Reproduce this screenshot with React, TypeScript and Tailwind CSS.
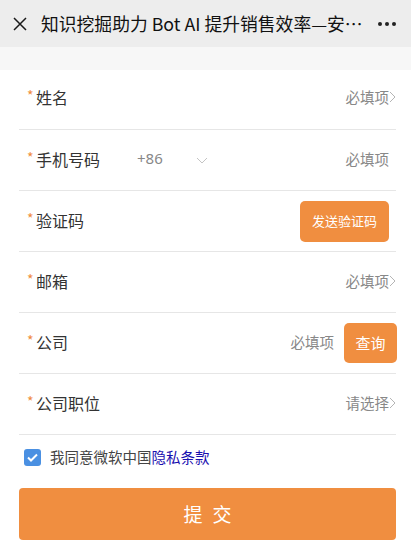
import React from "react";

const CJK = { fontFamily: '"Noto Sans CJK SC", "Noto Sans", sans-serif' };

function ChevronRight() {
  return (
    <svg width="7" height="12" viewBox="0 0 7 12" className="shrink-0">
      <path d="M1 1 L6 6 L1 11" fill="none" stroke="#b5b5b5" strokeWidth="1" />
    </svg>
  );
}

function Label({ text }: { text: string }) {
  return (
    <div className="flex items-center mb-[3px]">
      <span className="text-[#f08c3c] text-[14px] w-[9px] leading-none -mt-[4px]">*</span>
      <span className="text-[16px] text-[#333]">{text}</span>
    </div>
  );
}

function Row({ children }: { children: React.ReactNode }) {
  return (
    <div className="h-[61px] border-b border-[#e6e6e6] flex items-center pl-[8px]">{children}</div>
  );
}

export default function App() {
  return (
    <div className="w-[411px] h-[550px] bg-white overflow-hidden" style={CJK}>
      <div className="h-[47px] bg-[#ededed] flex items-center">
        <svg width="14" height="14" viewBox="0 0 14 14" className="ml-[13px] mr-[14px]">
          <path d="M1 1 L13 13 M13 1 L1 13" stroke="#1a1a1a" strokeWidth="1.5" fill="none" />
        </svg>
        <div className="text-[17.8px] text-[#111] whitespace-nowrap flex-1">知识挖掘助力 Bot AI 提升销售效率—安…</div>
        <div className="flex gap-[3px] mr-[15px]">
          <span className="w-[4px] h-[4px] rounded-full bg-[#222]"></span>
          <span className="w-[4px] h-[4px] rounded-full bg-[#222]"></span>
          <span className="w-[4px] h-[4px] rounded-full bg-[#222]"></span>
        </div>
      </div>
      <div className="h-[23px] bg-[#f7f7f7]"></div>
      <div className="ml-[19px] mr-[15px]">
        <div className="h-[60px] border-b border-[#e6e6e6] flex items-center pl-[8px] pb-[2px]">
          <Label text="姓名" />
          <div className="ml-auto flex items-center text-[14.5px] text-[#888] mb-[3px]">
            必填项
            <ChevronRight />
          </div>
        </div>
        <Row>
          <Label text="手机号码" />
          <span className="ml-[37px] text-[15px] text-[#888] mb-[3px]" style={{ fontFamily: '"Noto Sans", sans-serif' }}>+86</span>
          <svg width="12" height="7" viewBox="0 0 12 7" className="ml-[33px] mt-[1px]">
            <path d="M1 1 L6 6 L11 1" fill="none" stroke="#c4c4c4" strokeWidth="1" />
          </svg>
          <div className="ml-auto mr-[7px] text-[14.5px] text-[#888] mb-[3px]">必填项</div>
        </Row>
        <Row>
          <Label text="验证码" />
          <button className="ml-auto mr-[7px] w-[89px] h-[41px] rounded-[5px] bg-[#f08e40] text-white text-[13px]">发送验证码</button>
        </Row>
        <Row>
          <Label text="邮箱" />
          <div className="ml-auto flex items-center text-[14.5px] text-[#888] mb-[3px]">
            必填项
            <ChevronRight />
          </div>
        </Row>
        <Row>
          <Label text="公司" />
          <div className="ml-auto text-[14.5px] text-[#888] mr-[10px] mb-[3px]">必填项</div>
          <button className="w-[53px] h-[40px] rounded-[5px] bg-[#f08e40] text-white text-[15px] -mr-[1px]">查询</button>
        </Row>
        <Row>
          <Label text="公司职位" />
          <div className="ml-auto flex items-center text-[14.5px] text-[#888] mb-[3px]">
            请选择
            <ChevronRight />
          </div>
        </Row>
        <div className="flex items-center mt-[13px] ml-[5px] h-[18px]">
          <div className="w-[17px] h-[17px] rounded-[3px] bg-[#4a90e2] flex items-center justify-center">
            <svg width="11" height="9" viewBox="0 0 11 9">
              <path d="M1 4.5 L4 7.5 L10 1.5" fill="none" stroke="white" strokeWidth="2" />
            </svg>
          </div>
          <span className="ml-[9px] text-[14.5px] text-[#444]">
            我同意微软中国<span className="text-[#1a10b0]">隐私条款</span>
          </span>
        </div>
        <button className="mt-[22px] w-full h-[52px] rounded-[4px] bg-[#f08e40] text-white text-[19px] tracking-[10px] pl-[10px]">提交</button>
      </div>
    </div>
  );
}
